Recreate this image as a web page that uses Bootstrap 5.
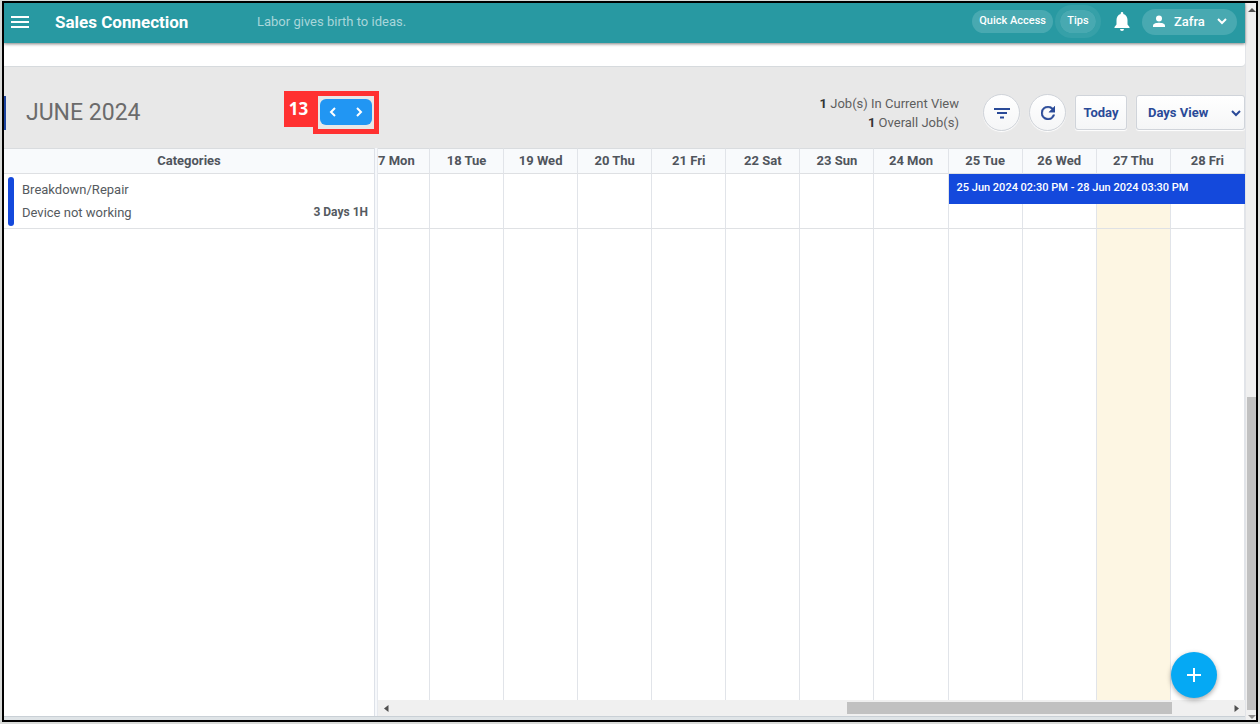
<!DOCTYPE html>
<html lang="en">
<head>
<meta charset="utf-8">
<meta name="viewport" content="width=device-width, initial-scale=1">
<title>Sales Connection</title>
<link href="https://cdn.jsdelivr.net/npm/bootstrap@5.3.0/dist/css/bootstrap.min.css" rel="stylesheet">
<style>
  body { font-family: Roboto, "Liberation Sans", sans-serif; font-size: 13px; line-height: 20px; color: #555a60; background: #fff; }
  button, select { font-family: inherit; }
  svg { display: block; flex: none; }
  .page { height: 100vh; padding: 1px 2px 2px; background: #d9dbd9; }
  .frame { border: 2px solid #000; background: #fff; overflow: hidden; }
  .min-0 { min-width: 0; min-height: 0; }

  .topbar { height: 40px; padding-bottom: 3px; background: #2899a2; color: #fff; box-shadow: 0 1px 3px rgba(0,0,0,.5); z-index: 2; }
  .menu-btn { margin-left: 6px; }
  .brand { width: 202px; margin-left: 25px; font-size: 17px; font-weight: 700; color: #fff; text-decoration: none; }
  .motto { font-size: 13px; color: #a9d6da; }
  .pill { border: 0; border-radius: 20px; background: #48a9b1; color: #fff; font-size: 11px; line-height: 18px; font-weight: 500; height: 23px; padding: 0 7px 2px; }
  .pill-tips { width: 36px; padding: 0 0 2px; outline: 5px solid #36a0a8; margin: 0 18px 0 7px; }
  .pill-user { height: 26px; font-size: 13px; padding: 0 10px; width: 95px; margin: 0 8px 0 12px; }

  .strip { height: 24px; background: #fff; border-bottom: 1px solid #d6dadd; border-radius: 0 0 4px 0; }
  .upper { background: #e8e8e8; }
  .tools { height: 81px; padding-top: 10px; }
  .tools-mark { width: 2px; height: 34px; background: #1e45a0; }
  .month { width: 278px; padding-left: 20px; font-size: 23px; line-height: 30px; font-weight: 400; color: #6b6b6b; margin: 0; }
  .step-no { width: 29px; height: 36px; background: #ff3131; color: #fff; font: 700 17px/36px "Open Sans", sans-serif; text-align: center; }
  .step-box { border: 5px solid #ff3131; padding: 3px 2px; height: 43px; }
  .step-box .btn { width: 26px; height: 26px; background: #2196f3; border: 0; color: #fff; padding: 0; display: flex; align-items: center; justify-content: center; }
  .counts { font-size: 13px; line-height: 19px; color: #5e5e5e; margin-right: 24px; }
  .counts b { color: #333; font-weight: 700; }
  .tool { background: linear-gradient(#fff, #f5f6f7); border: 1px solid #d0d4da; color: #2a4a98; font-size: 13px; font-weight: 700; box-shadow: 0 1px 1px #fff; }
  .tool-round, .tool-today { margin-right: 9px; padding: 0; }
  .tool-round { width: 37px; height: 37px; border-radius: 50%; display: flex; align-items: center; justify-content: center; }
  .tool-today { width: 52px; height: 35px; border-radius: 3px; }
  .tool-view { width: 109px; height: 35px; padding: 0 0 0 11px; border-radius: 3px; appearance: none; }
  .view-arrow { right: 4px; top: 14px; pointer-events: none; }

  .cats { width: 371px; border-right: 1px solid #dde1e8; }
  .split { width: 3px; background: #f6f8fb; border-right: 1px solid #e6e9ee; }
  .grid-table { width: 100%; border-collapse: separate; border-spacing: 0; table-layout: fixed; height: 100%; }
  .grid-table th { height: 26px; padding: 0; background: #f8fafc; border-top: 1px solid #d9dcdf; border-bottom: 1px solid #dee0e3; text-align: center; font-size: 13px; line-height: 24px; font-weight: 700; color: #50555c; }
  .grid-table td { padding: 0; }
  .task-row td { height: 55px; border-bottom: 1px solid #dfe1e4; }
  .days th, .days td { border-right: 1px solid #e1e4e9; }
  .days .part-day { width: 52px; text-align: left; }
  .days .now { background: #fdf6e3; }
  .cat-mark { width: 6px; height: 49px; border-radius: 3px; background: #1449dc; margin: 0 8px 0 4px; }
  .cat-text { line-height: 23px; padding-right: 6px; }
  .cat-text b { font-size: 12px; font-weight: 700; }
  .job { left: 0; top: 0; width: calc(400% + 4px); height: 30px; background: #1449dc; color: #fff; font-size: 11px; line-height: 28px; padding-left: 8px; font-weight: 500; white-space: nowrap; text-decoration: none; z-index: 1; }
  .hbar { height: 16px; background: #f0f0f0; padding: 0 6px; }
  .hthumb { width: 38%; height: 12px; background: #c1c1c1; margin-right: 62px; }
  .foot { height: 4px; background: #dfe4e7; border-top: 1px solid #c9d0d6; }
  .vbar { width: 11px; background: #f0f0f0; border-left: 1px solid #e2e4e8; padding: 5px 0 1px; }
  .vthumb { height: 313px; width: 9px; background: #c1c1c1; margin-bottom: 5px; }
  .add { width: 46px; height: 46px; right: 39px; bottom: 22px; background: #05a9f4; border: 0; border-radius: 50%; padding: 0; color: #fff; box-shadow: 0 2px 5px rgba(0,0,0,.35); z-index: 3; }
</style>
</head>
<body>
<div class="page">
<div class="frame position-relative d-flex h-100">
  <div class="d-flex flex-column flex-grow-1 min-0">
    <header class="topbar d-flex align-items-center position-relative flex-shrink-0">
      <button class="menu-btn btn p-0 border-0 text-white" type="button" aria-label="Menu">
        <svg width="20" height="14" viewBox="0 0 20 14" stroke="currentColor" stroke-width="2"><path d="M1 2h18M1 7h18M1 12h18"/></svg>
      </button>
      <a class="brand" href="#">Sales Connection</a>
      <span class="motto me-auto">Labor gives birth to ideas.</span>
      <button class="pill" type="button">Quick Access</button>
      <button class="pill pill-tips" type="button">Tips</button>
      <button class="btn p-0 border-0 text-white" type="button" aria-label="Notifications">
        <svg width="16" height="19" viewBox="0 0 16 19" fill="currentColor"><path d="M8 19a2 2 0 0 0 2-2H6a2 2 0 0 0 2 2zM13.500 12.500V8c0-3-1.500-5.300-4.200-6V1.300a1.300 1.300 0 0 0-2.600 0V2C4 2.700 2.500 5 2.500 8v4.500L.5 15v1h15v-1z"/></svg>
      </button>
      <button class="pill pill-user d-flex align-items-center" type="button">
        <svg width="14" height="13" viewBox="0 0 14 13" fill="currentColor"><circle cx="7" cy="3.500" r="3"/><path d="M1 12v-1.500C1 8.500 5 7.800 7 7.800s6 .7 6 2.700V12z"/></svg>
        <span class="ms-2 me-auto">Zafra</span>
        <svg width="10" height="7" viewBox="0 0 10 7" fill="none" stroke="currentColor" stroke-width="2"><path d="M1 1l4 4 4-4"/></svg>
      </button>
    </header>

    <div class="upper flex-shrink-0">
      <div class="strip"></div>
      <div class="tools d-flex align-items-center">
        <span class="tools-mark"></span>
        <h1 class="month">JUNE 2024</h1>
        <div class="d-flex align-items-start me-auto">
          <span class="step-no">13</span>
          <div class="step-box d-flex">
            <button class="btn rounded-0 rounded-start" type="button" aria-label="Previous"><svg width="8" height="12" viewBox="0 0 8 12" fill="none" stroke="currentColor" stroke-width="2"><path d="M6 2L2 6l4 4"/></svg></button>
            <button class="btn rounded-0 rounded-end" type="button" aria-label="Next"><svg width="8" height="12" viewBox="0 0 8 12" fill="none" stroke="currentColor" stroke-width="2"><path d="M2 2l4 4-4 4"/></svg></button>
          </div>
        </div>
        <div class="counts text-end"><div><b>1</b> Job(s) In Current View</div><div><b>1</b> Overall Job(s)</div></div>
        <button class="tool tool-round" type="button" aria-label="Filter">
          <svg width="16" height="12" viewBox="0 0 16 12" fill="none" stroke="currentColor" stroke-width="2"><path d="M0 2h16M3 6h10M6 10.500h4"/></svg>
        </button>
        <button class="tool tool-round" type="button" aria-label="Refresh">
          <svg width="14" height="14" viewBox="4 4 16 16" fill="currentColor" stroke="currentColor" stroke-width=".5"><path d="M17.650 6.350A7.960 7.960 0 0 0 12 4a8 8 0 1 0 7.730 10h-2.080A6 6 0 1 1 12 6c1.660 0 3.140.69 4.220 1.780L13 11h7V4z"/></svg>
        </button>
        <button class="tool tool-today" type="button">Today</button>
        <div class="position-relative">
          <select class="tool tool-view" aria-label="View"><option>Days View</option></select>
          <svg class="view-arrow position-absolute" width="10" height="8" viewBox="0 0 10 8" fill="none" stroke="#2a4a98" stroke-width="2"><path d="M1 2l4 4 4-4"/></svg>
        </div>
      </div>
    </div>

    <main class="d-flex flex-grow-1 min-0">
      <div class="cats flex-shrink-0">
        <table class="grid-table">
          <thead><tr><th>Categories</th></tr></thead>
          <tbody>
            <tr class="task-row"><td>
              <div class="d-flex align-items-center">
                <span class="cat-mark"></span>
                <div class="cat-text flex-grow-1">
                  <div>Breakdown/Repair</div>
                  <div class="d-flex justify-content-between"><span>Device not working</span><b>3 Days 1H</b></div>
                </div>
              </div>
            </td></tr>
            <tr><td></td></tr>
          </tbody>
        </table>
      </div>
      <div class="split flex-shrink-0"></div>
      <div class="d-flex flex-column flex-grow-1 min-0 overflow-hidden">
        <div class="flex-grow-1 min-0">
          <table class="grid-table days">
            <thead><tr><th class="part-day">7 Mon</th><th>18 Tue</th><th>19 Wed</th><th>20 Thu</th><th>21 Fri</th><th>22 Sat</th><th>23 Sun</th><th>24 Mon</th><th>25 Tue</th><th>26 Wed</th><th>27 Thu</th><th>28 Fri</th></tr></thead>
            <tbody>
              <tr class="task-row"><td></td><td></td><td></td><td></td><td></td><td></td><td></td><td></td><td class="position-relative"><a href="#" class="job position-absolute">25 Jun 2024 02:30 PM - 28 Jun 2024 03:30 PM</a></td><td></td><td class="now"></td><td></td></tr>
              <tr><td></td><td></td><td></td><td></td><td></td><td></td><td></td><td></td><td></td><td></td><td class="now"></td><td></td></tr>
            </tbody>
          </table>
        </div>
        <div class="hbar d-flex align-items-center flex-shrink-0">
          <svg class="me-auto" width="5" height="7" viewBox="0 0 5 7" fill="#505050"><path d="M4.500 0v7L0 3.500z"/></svg>
          <div class="hthumb"></div>
          <svg width="5" height="7" viewBox="0 0 5 7" fill="#505050"><path d="M.5 0v7L5 3.500z"/></svg>
        </div>
      </div>
    </main>
    <div class="foot flex-shrink-0"></div>
  </div>

  <div class="vbar d-flex flex-column align-items-end flex-shrink-0">
    <svg class="mb-auto" width="8" height="4" viewBox="0 0 8 4" fill="#505050"><path d="M0 4l4-4 4 4z"/></svg>
    <div class="vthumb"></div>
    <svg width="8" height="4" viewBox="0 0 8 4" fill="#909090"><path d="M0 0l4 4 4-4z"/></svg>
  </div>
  <button class="add position-absolute" type="button" aria-label="Add">
    <svg class="mx-auto" width="16" height="16" viewBox="0 0 16 16" stroke="currentColor" stroke-width="2"><path d="M8 1v14M1 8h14"/></svg>
  </button>
</div>
</div>
<script src="https://cdn.jsdelivr.net/npm/bootstrap@5.3.0/dist/js/bootstrap.bundle.min.js"></script>
</body>
</html>
